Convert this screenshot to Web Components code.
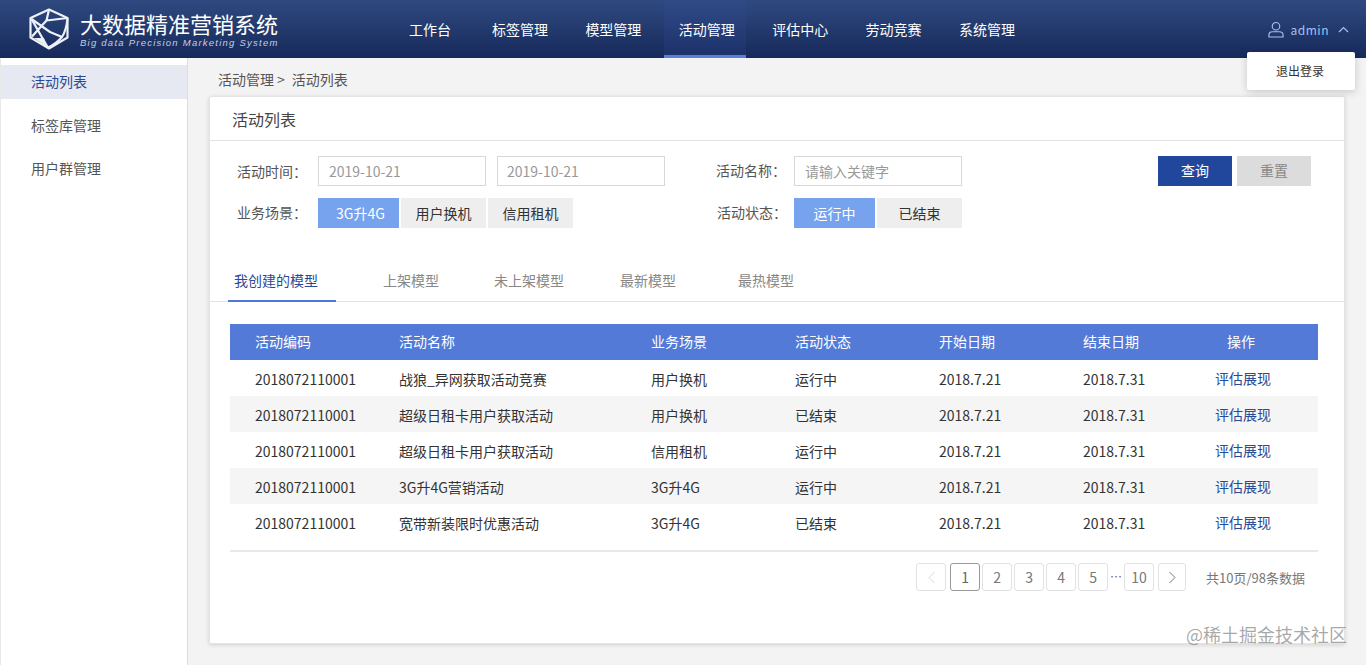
<!DOCTYPE html>
<html lang="zh"><head><meta charset="utf-8">
<style>
html,body{margin:0;height:665px;overflow:hidden;background:#f3f3f3;font-family:"Noto Sans CJK SC","Noto Sans",sans-serif;font-size:14px;color:#333}
</style></head><body>
<app-shell></app-shell>
<script>
function def(name,css,html){
  customElements.define(name,class extends HTMLElement{
    constructor(){super();const s=this.attachShadow({mode:'open'});s.innerHTML='<style>'+css+'</style>'+html;}
  });
}
def('app-logo',`:host{display:flex;align-items:center;gap:11px;width:394px;flex:none;box-sizing:border-box;padding-left:29px}
 svg{width:40px;height:42px;flex:none}
 .t{display:flex;flex-direction:column;color:#fff}
 .a{font-size:22px;line-height:26px;white-space:nowrap}
 .b{font:italic 9.5px/12px "Liberation Sans",sans-serif;letter-spacing:1.24px;color:#c5cde0;white-space:nowrap;margin-top:1px}`,
 `<svg viewBox="29 8 40 42" fill="none" stroke="#eef1f7" stroke-width="2.200" stroke-linejoin="round"><path d="M49 9.500 67.500 18V37.500L49 48.500 30.500 37.500V18Z"/><path d="M49 9.500 46.500 20.500 67.500 18M46.500 20.500 32 36.500M31.500 19 47.500 47M67.500 18Q66.500 30 62 37 56 44 48 47.500M31.500 19 50 32 62 37"/><path d="M34 38 46 46 44 38Z" fill="#eef1f7" stroke="none"/></svg><div class="t"><div class="a">大数据精准营销系统</div><div class="b">Big data Precision Marketing System</div></div>`);
def('nav-item',`:host{display:flex;align-items:center;height:58px;padding:0 11px 0 15px;color:#fff;font-size:14px;box-sizing:border-box;white-space:nowrap}
 :host([active]){background:linear-gradient(#304b87,#1c3069);box-shadow:inset 0 -3px 0 #5a7fd6}`,`<slot></slot>`);
def('user-menu',`:host{display:flex;align-items:center;gap:7px;color:#a9c0ec;font-size:12px;margin-left:auto;margin-right:17px;position:relative;height:58px;letter-spacing:.5px}
 svg{display:block}
 .pop{position:absolute;top:52px;right:-6px;width:108px;height:38px;background:#fff;color:#333;font-size:12px;display:flex;align-items:center;justify-content:center;padding:0 2px 2px 0;box-sizing:border-box;box-shadow:0 2px 8px rgba(0,0,0,.18);border-radius:2px;letter-spacing:0}`,
 `<svg width="16" height="17" viewBox="0 0 17 18" fill="none" stroke="#a9c0ec" stroke-width="1.200"><circle cx="8.500" cy="5.500" r="4"/><path d="M1 17v-2.200c0-2 1.600-3.400 4-3.400h7c2.400 0 4 1.400 4 3.400V17Z"/></svg><span>admin</span><svg style="margin-left:2px" width="11" height="7" viewBox="0 0 11 7" fill="none" stroke="#a9c0ec" stroke-width="1.200"><path d="M1 6 5.500 1.500 10 6"/></svg><div class="pop">退出登录</div>`);
def('app-header',`:host{display:flex;height:58px;background:linear-gradient(#2f4a80,#16295a);flex:none}
 nav{display:flex;gap:11.400px}`,`<app-logo></app-logo><nav><nav-item style="margin-right:3.600px">工作台</nav-item><nav-item>标签管理</nav-item><nav-item>模型管理</nav-item><nav-item active>活动管理</nav-item><nav-item>评估中心</nav-item><nav-item>劳动竞赛</nav-item><nav-item>系统管理</nav-item></nav><user-menu></user-menu>`);
def('side-bar',`:host{display:block;width:188px;flex:none;background:#fff;border-right:1px solid #dcdcdc;box-sizing:border-box;padding-top:7px;color:#555;font-size:14px;border-left:1px solid #e8e8e8}
 div{height:34px;line-height:35px;padding-left:30px;margin-bottom:9px}
 .on{background:#e6e8f2;color:#2a4a96;line-height:33px}`,`<div class="on">活动列表</div><div>标签库管理</div><div>用户群管理</div>`);
def('field-label',`:host{display:block;color:#555;font-size:14px;white-space:nowrap}`,`<slot></slot>`);
def('text-box',`:host{display:flex;align-items:center;box-sizing:border-box;width:168px;height:30px;border:1px solid #d8d8d8;padding-left:10px;color:#999;font-size:14px;background:#fff}`,`<slot></slot>`);
def('chip-btn',`:host{display:flex;align-items:center;justify-content:center;height:30px;box-sizing:border-box;background:#eee;color:#333;font-size:14px;white-space:nowrap}
 :host([on]){background:#76a2ee;color:#fff}
 :host([primary]){background:#21479d;color:#fff;padding-bottom:2px}
 :host([muted]){background:#dcdcdc;color:#888;padding-bottom:2px}`,`<slot></slot>`);
def('filter-form',`:host{display:block;height:116px;box-sizing:border-box;padding:15px 0 0 27px}
 .row{display:flex;align-items:center;height:30px;margin-bottom:12px}
 .l{width:81px}
 .mid{margin-left:51px;width:78px}
 .up{margin-bottom:3px}
 .g{display:flex}
 .btns{display:flex;gap:5px;margin-left:196px}`,
 `<div class="row"><field-label class="l">活动时间：</field-label><text-box>2019-10-21</text-box><text-box style="margin-left:11px;padding-left:9px">2019-10-21</text-box><field-label class="mid up" style="margin-bottom:2px">活动名称：</field-label><text-box>请输入关键字</text-box><div class="btns"><chip-btn primary style="width:74px">查询</chip-btn><chip-btn muted style="width:74px">重置</chip-btn></div></div>
 <div class="row"><field-label class="l up">业务场景：</field-label><div class="g"><chip-btn on style="width:81px;padding-left:4px">3G升4G</chip-btn><chip-btn style="width:85px;margin-left:2px">用户换机</chip-btn><chip-btn style="width:85px;margin-left:2px">信用租机</chip-btn></div><field-label class="up" style="margin-left:144px;width:77px">活动状态：</field-label><div class="g"><chip-btn on style="width:81px">运行中</chip-btn><chip-btn style="width:85px;margin-left:2px">已结束</chip-btn></div></div>`);
def('tab-bar',`:host{display:flex;height:44px;border-bottom:1px solid #e3e3e3;padding-left:18px;box-sizing:content-box;font-size:14px;color:#888}
 div{height:44px;box-sizing:border-box;display:flex;align-items:center;white-space:nowrap;padding-top:2px}
 .on{color:#2a4a96;border-bottom:2px solid #4f78d4;margin-bottom:-1px;height:45px;padding-left:6px;width:108px}`,
 `<div class="on">我创建的模型</div><div style="margin-left:47px">上架模型</div><div style="margin-left:55px">未上架模型</div><div style="margin-left:56px">最新模型</div><div style="margin-left:62px">最热模型</div>`);
const rows=[['2018072110001','战狼_异网获取活动竞赛','用户换机','运行中'],['2018072110001','超级日租卡用户获取活动','用户换机','已结束'],['2018072110001','超级日租卡用户获取活动','信用租机','运行中'],['2018072110001','3G升4G营销活动','3G升4G','运行中'],['2018072110001','宽带新装限时优惠活动','3G升4G','已结束']];
const cols='grid-template-columns:144px 252px 144px 144px 144px 144px 1fr';
def('data-table',`:host{display:block;margin:22px 26px 0 20px;font-size:14px;color:#333;border-bottom:2px solid #e8e8e8;padding-bottom:10px}
 .r{display:grid;${cols};height:36px;align-items:center;padding-left:25px;padding-top:1px;box-sizing:border-box}
 .h{background:#527ad6;color:#fff;padding-top:0;padding-bottom:3px}
 .a{color:#2a4a96;margin-left:-12px;position:relative;top:-1px}
 .r:nth-child(even):not(.h){background:#f5f5f5}
 .r>span{white-space:nowrap}`,
 `<div class="r h"><span>活动编码</span><span>活动名称</span><span>业务场景</span><span>活动状态</span><span>开始日期</span><span>结束日期</span><span>操作</span></div>`+rows.map(r=>`<div class="r"><span>${r[0]}</span><span>${r[1]}</span><span>${r[2]}</span><span>${r[3]}</span><span>2018.7.21</span><span>2018.7.31</span><span class="a">评估展现</span></div>`).join(''));
def('page-btn',`:host{display:flex;align-items:center;justify-content:center;box-sizing:border-box;width:30px;height:28px;border:1px solid #e2e2e2;border-radius:3px;color:#777;font-size:14px;background:#fff}
 :host([cur]){border-color:#999;color:#666}`,`<slot></slot>`);
def('pager-bar',`:host{display:flex;align-items:center;justify-content:flex-end;margin:11px 39px 0 0;height:28px;gap:2px;color:#777}
 .e{width:12px;text-align:center;color:#666;font-size:12px;line-height:20px}
 .t{margin-left:18px;white-space:nowrap;font-size:13px}`,
 `<page-btn style="margin-right:2px"><svg width="9" height="13" viewBox="0 0 9 13" fill="none" stroke="#d8d8d8"><path d="M7.500 1 2 6.500 7.500 12"/></svg></page-btn><page-btn cur>1</page-btn><page-btn>2</page-btn><page-btn>3</page-btn><page-btn>4</page-btn><page-btn>5</page-btn><span class="e">…</span><page-btn>10</page-btn><page-btn style="margin-left:2px;width:28px"><svg width="9" height="13" viewBox="0 0 9 13" fill="none" stroke="#777"><path d="M1.500 1 7 6.500 1.500 12"/></svg></page-btn><span class="t">共10页/98条数据</span>`);
def('list-card',`:host{display:block;background:#fff;height:548px;box-sizing:border-box;border:1px solid #e4e4e4;border-radius:2px;box-shadow:0 1px 4px rgba(0,0,0,.14)}
 .title{height:43px;line-height:44px;padding-left:22px;font-size:16px;color:#444;border-bottom:1px solid #e3e3e3}`,
 `<div class="title">活动列表</div><filter-form></filter-form><tab-bar></tab-bar><data-table></data-table><pager-bar></pager-bar>`);
def('main-area',`:host{display:block;flex:1;padding:0 21px;min-width:0}
 .crumb{height:39px;margin-bottom:-1px;line-height:43px;padding-left:9px;font-size:14px;color:#555;white-space:pre;display:flex}
 .crumb i{font-style:normal;margin:0 7px 0 3px}`,
 `<div class="crumb"><span>活动管理</span><i>&gt;</i><span>活动列表</span></div><list-card></list-card>`);
def('app-shell',`:host{display:flex;flex-direction:column;height:665px;width:1366px;position:relative;overflow:hidden}
 .b{display:flex;flex:1;min-height:0}
 .wm{position:absolute;right:19px;bottom:20px;color:rgba(110,110,110,.6);font-size:18px;line-height:22px;white-space:nowrap}`,
 `<app-header></app-header><div class="b"><side-bar></side-bar><main-area></main-area></div><div class="wm">@稀土掘金技术社区</div>`);
</script>
</body></html>
